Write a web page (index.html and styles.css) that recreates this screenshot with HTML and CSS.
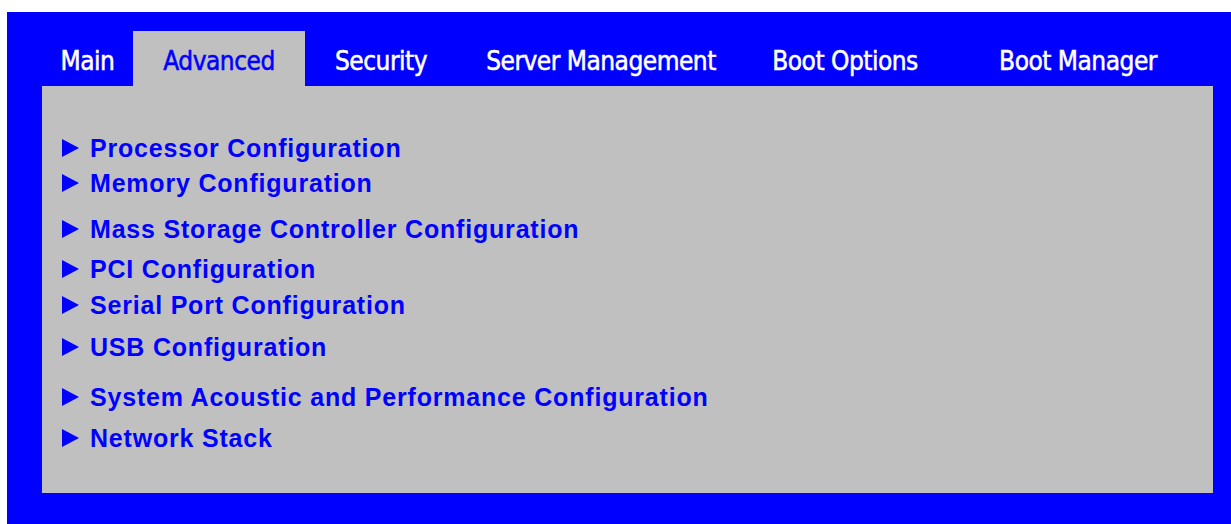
FILE: index.html
```html
<!DOCTYPE html>
<html lang="en">

<head>
    <meta charset="UTF-8">
    <meta content="width=device-width, initial-scale=1.0" name="viewport">
    <title>Advanced</title>
    <link rel="stylesheet" href="styles.css">
</head>

<body>

    <div class="screen">
        <!-- Tabs -->
        <ul class="tabs">
            <li class="tab tab-main">Main</li>
            <li class="tab tab-advanced active">Advanced</li>
            <li class="tab tab-security">Security</li>
            <li class="tab tab-server">Server Management</li>
            <li class="tab tab-boot">Boot Options</li>
            <li class="tab tab-manager">Boot Manager</li>
        </ul>

        <div class="panel">
            <ul class="menu">
                <li>Processor Configuration</li>
                <li>Memory Configuration</li>
                <li>Mass Storage Controller Configuration</li>
                <li>PCI Configuration</li>
                <li>Serial Port Configuration</li>
                <li>USB Configuration</li>
                <li>System Acoustic and Performance Configuration</li>
                <li>Network Stack</li>
            </ul>
        </div>
    </div>

</body>

</html>
```

FILE: styles.css
```css
body {
    margin: 0;
    background: white;
}

.screen {
    margin: 12px 0 0 7px;
    height: 512px;
    box-sizing: border-box;
    padding: 19px 18px 0 35px;
    background: #0000ff;
}

.tabs {
    display: flex;
    margin: 0;
    padding: 0;
    list-style: none;
    height: 55px;
}

.tab {
    display: flex;
    align-items: center;
    justify-content: center;
    padding-top: 4px;
    box-sizing: border-box;
    font-family: "DejaVu Sans Condensed", "DejaVu Sans", sans-serif;
    font-size: 26px;
    letter-spacing: -0.5px;
    color: white;
    -webkit-text-stroke: 0.5px white;
}

.tab.active {
    background: #c0c0c0;
    color: #0000ff;
    -webkit-text-stroke: 0.5px #0000ff;
}

.tab-main {
    width: 91px;
}

.tab-advanced {
    width: 172px;
}

.tab-security {
    width: 152px;
}

.tab-server {
    width: 288px;
}

.tab-boot {
    width: 200px;
}

.tab-manager {
    width: 266px;
}

.panel {
    height: 407px;
    background: #c0c0c0;
}

.menu {
    margin: 0;
    padding: 44px 0 0 20px;
    list-style: none;
}

.menu li {
    display: flex;
    align-items: center;
    height: 36px;
    font-family: "Liberation Sans", Arial, sans-serif;
    font-weight: bold;
    font-size: 25px;
    letter-spacing: 0.8px;
    color: #0000ff;
}

.menu li::before {
    content: "";
    width: 0;
    height: 0;
    margin-right: 11px;
    border-left: 17px solid #0000ff;
    border-top: 9px solid transparent;
    border-bottom: 9px solid transparent;
}

.menu li:nth-child(2) {
    margin-top: -1px;
}

.menu li:nth-child(3) {
    margin-top: 10px;
}

.menu li:nth-child(4) {
    margin-top: 4px;
}

.menu li:nth-child(6) {
    margin-top: 6px;
}

.menu li:nth-child(7) {
    margin-top: 14px;
}

.menu li:nth-child(8) {
    margin-top: 5px;
}
```
